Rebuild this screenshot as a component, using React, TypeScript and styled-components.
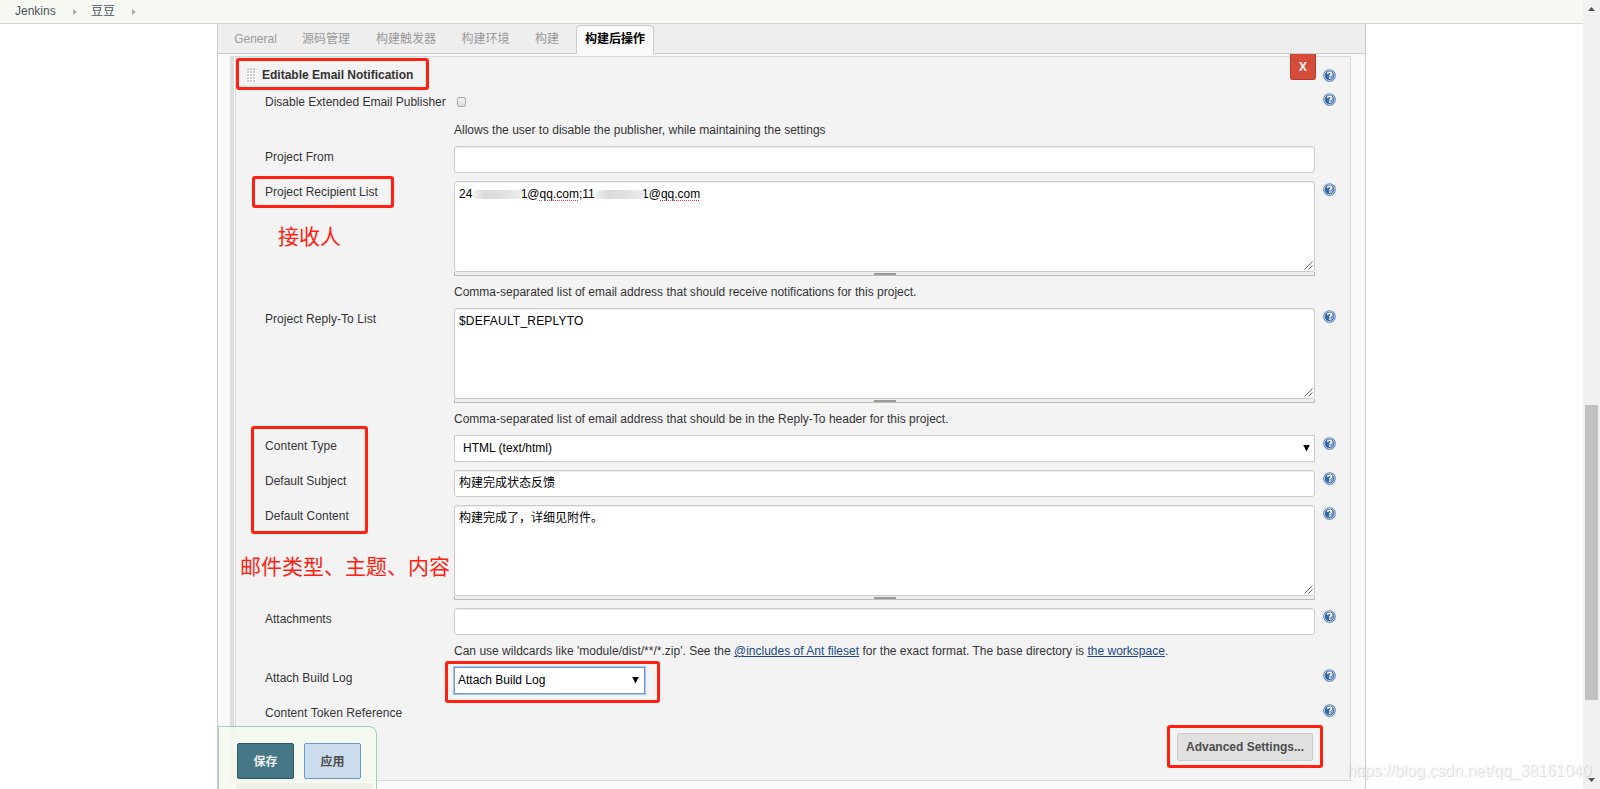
import React from "react";
import styled, { createGlobalStyle } from "styled-components";

const sans = `"Liberation Sans", "Noto Sans CJK SC", sans-serif`;

const Global = createGlobalStyle`
  *, *::before, *::after { box-sizing: border-box; }
  body { margin: 0; background: #fff; overflow: hidden; font: 12px ${sans}; color: #333; }
`;

const Page = styled.div`
  position: relative;
  display: grid;
  grid-template-columns: 1583px 17px;
  height: 789px;
  overflow: hidden;
`;
const Main = styled.div`
  display: flex;
  flex-direction: column;
  align-items: center;
  min-height: 0;
`;
const Breadcrumbs = styled.nav`
  width: 100%;
  height: 24px;
  flex: none;
  display: flex;
  align-items: center;
  padding-left: 15px;
  background: #f6faf2;
  border-bottom: 1px solid #d3d7cf;
  color: #4d545d;
`;
const Crumb = styled.span<{ $w: number }>`
  width: ${(p) => p.$w}px;
  line-height: 23px;
  white-space: nowrap;
`;
const Arrow = styled.i<{ $before: number; $after: number }>`
  width: 4px;
  height: 6px;
  margin: 1px ${(p) => p.$after}px 0 ${(p) => p.$before}px;
  background: #aaa;
  clip-path: polygon(0 0, 100% 50%, 0 100%);
`;
const Panel = styled.section`
  width: 1149px;
  flex: 1;
  background: #f9f9f9;
  border: 1px solid #ccc;
  border-width: 0 1px;
`;
const Tabs = styled.div`
  display: flex;
  align-items: flex-end;
  height: 30px;
  background: #eee;
  border-bottom: 1px solid #ccc;
  padding-left: 5px;
`;
const Tab = styled.div<{ $w: number; $active?: boolean }>`
  width: ${(p) => p.$w}px;
  height: 29px;
  line-height: 27px;
  text-align: center;
  white-space: nowrap;
  color: ${(p) => (p.$active ? "#000" : "#999")};
  font-weight: ${(p) => (p.$active ? 700 : 400)};
  border: 1px solid ${(p) => (p.$active ? "#ccc" : "transparent")};
  border-bottom: 0;
  border-radius: 4px 4px 0 0;
  background: ${(p) => (p.$active ? "#f9f9f9" : "transparent")};
  margin-bottom: -1px;
`;
const Chunk = styled.div`
  margin: 2px 14px 0 12px;
  height: 725px;
  display: flex;
  background: linear-gradient(to right, #ddd 4px, #f9f9f9 4px);
  padding-left: 5px;
`;
const Form = styled.div`
  position: relative;
  flex: 1;
  background: #f3f3f3;
  border: 1px solid #d8d8d8;
  padding-left: 29px;
`;
const Title = styled.div`
  height: 34px;
  display: grid;
  grid-template-columns: 1069px 1fr;
  padding-top: 10px;
  margin-left: -19px;
`;
const TitleText = styled.h3`
  display: flex;
  gap: 6px;
  margin: -1px 0 0;
  font-size: 12px;
  line-height: 18px;
`;
const Grip = styled.i`
  width: 10px;
  height: 16px;
  margin-top: 1px;
  background:
    linear-gradient(#fff 1px, transparent 1px) 0 0 / 3px 3px,
    linear-gradient(90deg, #fff 1px, #c9c9c9 1px) 0 0 / 3px 3px;
`;
const Row = styled.div<{ $h: number }>`
  height: ${(p) => p.$h}px;
  display: grid;
  grid-template-columns: 189px 861px auto;
`;
const Label = styled.div`
  line-height: 22px;
  white-space: nowrap;
`;
const Spread = styled.span<{ $s: number }>`
  letter-spacing: ${(p) => p.$s}px;
`;
const Hint = styled.div`
  line-height: 32px;
  white-space: nowrap;
  letter-spacing: 0.01px;
  a { color: #204a87; text-decoration: underline; }
`;
const Help = styled.svg`
  display: block;
  width: 13px;
  height: 13px;
  margin: 2px 0 0 8px;
`;
const Field = styled.div`
  height: 27px;
  border: 1px solid #ccc;
  border-radius: 3px;
  background: #fff;
  box-shadow: inset 0 1px 1px rgba(0, 0, 0, 0.075);
  padding: 0 4px;
  line-height: 25px;
  color: #000;
`;
const Select = styled(Field)<{ $w?: number; $focus?: boolean }>`
  display: flex;
  justify-content: space-between;
  align-items: center;
  width: ${(p) => (p.$w ? p.$w + "px" : "auto")};
  border-radius: 0;
  padding: 0 ${(p) => (p.$focus ? 5 : 4)}px 0 ${(p) => (p.$focus ? 3 : 8)}px;
  border-color: ${(p) => (p.$focus ? "#6f97dc" : "#ccc")};
  box-shadow: ${(p) => (p.$focus ? "0 0 0 1px #a5c3f3" : "none")};
`;
const Caret = styled.i`
  width: 7px;
  height: 7px;
  margin-top: -1px;
  background: #000;
  clip-path: polygon(0 0, 100% 0, 50% 100%);
`;
const Area = styled.div`
  height: 91px;
  display: flex;
  flex-direction: column;
  justify-content: space-between;
  border: 1px solid #ccc;
  border-radius: 3px;
  background: #fff;
  box-shadow: inset 0 1px 1px rgba(0, 0, 0, 0.075);
  padding: 5px 1px 1px 4px;
  line-height: 15px;
  color: #000;
`;
const AreaText = styled.div`
  display: flex;
  white-space: pre;
`;
const Resize = styled.svg`
  width: 9px;
  height: 9px;
  align-self: flex-end;
`;
const Handle = styled.div`
  height: 4px;
  display: flex;
  justify-content: center;
  padding-top: 1px;
  border: 1px solid #babdb6;
  border-top: 0;
  background: #eee;
  &::after { content: ""; width: 22px; height: 2px; background: #999b94; }
`;
const Smudge = styled.span<{ $w: number }>`
  position: relative;
  display: flex;
  justify-content: flex-end;
  width: ${(p) => p.$w}px;
  height: 15px;
  overflow: hidden;
  &::after {
    content: "";
    position: absolute;
    inset: 3px 4px 3px 1px;
    border-radius: 4px;
    background: linear-gradient(90deg, #f0f0f0, #dadada 25%, #e2e2e2 65%, #ededed);
  }
`;
const Squiggle = styled.span`
  text-decoration: underline dotted #e33 1px;
  text-underline-offset: 2px;
`;
const Check = styled.i`
  display: block;
  width: 9px;
  height: 10px;
  margin: 6px 0 7px 3px;
  border: 1px solid #aaa;
  border-radius: 2px;
  background: linear-gradient(#f0f0f0, #ddd);
`;
const Delete = styled.button`
  position: absolute;
  top: -3px;
  right: 34px;
  width: 26px;
  height: 26px;
  padding: 0;
  border: 1px solid #b83c2e;
  border-top: 0;
  border-radius: 0 0 3px 3px;
  background: #d54c3b;
  color: #f6f6f6;
  font: 700 12px "Open Sans", sans-serif;
`;
const Footer = styled.div`
  display: flex;
  justify-content: flex-end;
  padding-right: 37px;
`;
const Advanced = styled.button`
  width: 136px;
  height: 28px;
  padding: 0;
  border: 1px solid #ccc;
  border-radius: 2px;
  background: #e0e0e0;
  color: #4d4d4d;
  font: 700 12px ${sans};
`;
const SaveBar = styled.div`
  position: absolute;
  left: 218px;
  top: 726px;
  width: 159px;
  height: 64px;
  display: grid;
  grid-template: 36px 10px / 57px 57px;
  gap: 4px 10px;
  padding: 16px 0 0 18px;
  border: 1px solid #a6ccb4;
  border-radius: 0 8px 0 0;
  background: rgba(245, 249, 239, 0.88);
`;
const Action = styled.button<{ $primary?: boolean }>`
  padding: 0 0 2px;
  border: 1px solid ${(p) => (p.$primary ? "#2f5767" : "#6699cf")};
  border-radius: 2px;
  background: ${(p) => (p.$primary ? "#457786" : "#cbdcec")};
  color: ${(p) => (p.$primary ? "#eee" : "#4d4d4d")};
  font: 700 12px ${sans};
`;
const Ghost = styled.div`
  width: 137px;
  height: 10px;
  margin-left: -1px;
  border-radius: 2px;
  background: #eff1e9;
`;
const Mark = styled.div<{ $x: number; $y: number; $w: number; $h: number }>`
  position: absolute;
  left: ${(p) => p.$x}px;
  top: ${(p) => p.$y}px;
  width: ${(p) => p.$w}px;
  height: ${(p) => p.$h}px;
  border: 3px solid #ff2010;
  border-radius: 3px;
`;
const Note = styled.div<{ $x: number; $y: number }>`
  position: absolute;
  left: ${(p) => p.$x}px;
  top: ${(p) => p.$y}px;
  font-size: 21px;
  line-height: 30px;
  color: #ff2010;
  white-space: nowrap;
`;
const Watermark = styled.div`
  position: absolute;
  left: 1347px;
  top: 761px;
  font-size: 16px;
  line-height: 20px;
  letter-spacing: -0.04px;
  color: rgba(255, 255, 255, 0.8);
  text-shadow: 1px 1px 1px rgba(0, 0, 0, 0.14), 0 0 1px rgba(0, 0, 0, 0.1);
`;
const Scrollbar = styled.div`
  display: flex;
  flex-direction: column;
  align-items: center;
  background: #f1f1f1;
`;
const ScrollArrow = styled.i<{ $down?: boolean }>`
  width: 7px;
  height: 4px;
  margin-top: ${(p) => (p.$down ? 78 : 7)}px;
  background: #505050;
  clip-path: ${(p) => (p.$down ? "polygon(0 0, 100% 0, 50% 100%)" : "polygon(50% 0, 100% 100%, 0 100%)")};
`;
const Thumb = styled.div`
  width: 13px;
  height: 295px;
  margin-top: 394px;
  background: #c1c1c1;
`;

const HelpIcon = () => (
  <Help viewBox="0 0 13 13">
    <circle cx="6.5" cy="6.5" r="6.3" fill="#5b7fb4" />
    <circle cx="6.5" cy="6.5" r="5.1" fill="#3465a4" stroke="#b9cbe4" strokeWidth="1" />
    <path d="M7 2.2a4.4 4.4 0 0 1 0 8.6z" fill="#7d9fce" />
    <path d="M4.7 5q0-1.7 1.9-1.7T8.5 4.9q0 .8-1 1.3-.8.4-.8 1.2" fill="none" stroke="#fff" strokeWidth="1.4" />
    <rect x="5.9" y="8.4" width="1.6" height="1.5" fill="#fff" />
  </Help>
);

const TextArea = ({ children }: { children: React.ReactNode }) => (
  <div>
    <Area>
      <AreaText>{children}</AreaText>
      <Resize viewBox="0 0 9 9">
        <path d="M.5 8.5l8-8M4.5 8.5l4-4" stroke="#555" strokeWidth=".9" />
      </Resize>
    </Area>
    <Handle />
  </div>
);

type RowProps = { label: string; h: number; s?: number; help?: boolean; hint?: React.ReactNode; children?: React.ReactNode };
const FormRow = ({ label, h, s = 0, help = true, hint, children }: RowProps) => (
  <Row $h={h}>
    <Label><Spread $s={s}>{label}</Spread></Label>
    <div>
      {children}
      {hint && <Hint>{hint}</Hint>}
    </div>
    {help && <HelpIcon />}
  </Row>
);

export default function App() {
  return (
    <>
      <Global />
      <Page>
        <Main>
          <Breadcrumbs>
            <Crumb $w={41}>Jenkins</Crumb>
            <Arrow $before={17} $after={14} />
            <Crumb $w={24}>豆豆</Crumb>
            <Arrow $before={17} $after={0} />
          </Breadcrumbs>
          <Panel>
            <Tabs>
              <Tab $w={65}>General</Tab>
              <Tab $w={76}>源码管理</Tab>
              <Tab $w={84}>构建触发器</Tab>
              <Tab $w={75}>构建环境</Tab>
              <Tab $w={48}>构建</Tab>
              <Tab $w={5} />
              <Tab $w={78} $active>构建后操作</Tab>
            </Tabs>
            <Chunk>
              <Form>
                <Delete>X</Delete>
                <Title>
                  <TitleText><Grip />Editable Email Notification</TitleText>
                  <HelpIcon />
                </Title>
                <FormRow label="Disable Extended Email Publisher" h={55} hint="Allows the user to disable the publisher, while maintaining the settings">
                  <Check />
                </FormRow>
                <FormRow label="Project From" h={35} help={false}><Field /></FormRow>
                <FormRow label="Project Recipient List" h={127} hint="Comma-separated list of email address that should receive notifications for this project.">
                  <TextArea>
                    24<Smudge $w={55}>1</Smudge>@<Squiggle>qq.com</Squiggle>;11
                    <Smudge $w={54}>1</Smudge>@<Squiggle>qq.com</Squiggle>
                  </TextArea>
                </FormRow>
                <FormRow label="Project Reply-To List" s={0.05} h={127} hint="Comma-separated list of email address that should be in the Reply-To header for this project.">
                  <TextArea><Spread $s={0.2}>$DEFAULT_REPLYTO</Spread></TextArea>
                </FormRow>
                <FormRow label="Content Type" s={0.07} h={35}><Select>HTML (text/html)<Caret /></Select></FormRow>
                <FormRow label="Default Subject" h={35}><Field>构建完成状态反馈</Field></FormRow>
                <FormRow label="Default Content" s={0.03} h={103}><TextArea>构建完成了，详细见附件。</TextArea></FormRow>
                <FormRow
                  label="Attachments"
                  h={59}
                  hint={<>Can use wildcards like 'module/dist/**/*.zip'. See the <a>@includes of Ant fileset</a> for the exact format. The base directory is <a>the workspace</a>.</>}
                >
                  <Field />
                </FormRow>
                <FormRow label="Attach Build Log" h={35}><Select $w={191} $focus>Attach Build Log<Caret /></Select></FormRow>
                <FormRow label="Content Token Reference" s={0.06} h={31} />
                <Footer><Advanced>Advanced Settings...</Advanced></Footer>
              </Form>
            </Chunk>
          </Panel>
        </Main>
        <Scrollbar>
          <ScrollArrow />
          <Thumb />
          <ScrollArrow $down />
        </Scrollbar>
        <SaveBar>
          <Action $primary>保存</Action>
          <Action>应用</Action>
          <Ghost />
        </SaveBar>
        <Mark $x={236} $y={58} $w={193} $h={32} />
        <Mark $x={252} $y={176} $w={142} $h={32} />
        <Mark $x={251} $y={426} $w={117} $h={108} />
        <Mark $x={445} $y={661} $w={215} $h={42} />
        <Mark $x={1167} $y={725} $w={156} $h={43} />
        <Note $x={278} $y={222}>接收人</Note>
        <Note $x={240} $y={552}>邮件类型、主题、内容</Note>
        <Watermark>https://blog.csdn.net/qq_38161040</Watermark>
      </Page>
    </>
  );
}
